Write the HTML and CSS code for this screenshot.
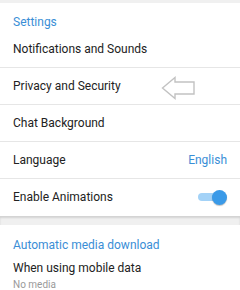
FILE: index.html
```html
<!DOCTYPE html>
<html>
<head>
<meta charset="utf-8">
<link rel="stylesheet" href="styles.css">
</head>
<body>
<div class="screen">
  <div class="top-strip"></div>
  <section class="section">
    <div class="header">Settings</div>
    <div class="row"><span class="label">Notifications and Sounds</span></div>
    <div class="row"><span class="label">Privacy and Security</span></div>
    <div class="row"><span class="label">Chat Background</span></div>
    <div class="row"><span class="label">Language</span><span class="value">English</span></div>
    <div class="row last"><span class="label">Enable Animations</span><span class="toggle"><span class="track"></span><span class="knob"></span></span></div>
  </section>
  <div class="gap"></div>
  <section class="section">
    <div class="header header2">Automatic media download</div>
    <div class="row2">
      <span class="label">When using mobile data</span>
      <span class="sub">No media</span>
    </div>
  </section>
  <svg class="arrow" width="40" height="28" viewBox="0 0 40 28">
    <polygon points="1.5,12 14,1.5 14,6 33,6 33,18 14,18 14,22.5" fill="none" stroke="#c2c2c2" stroke-width="1.4" stroke-linejoin="miter"/>
  </svg>
</div>
</body>
</html>
```
FILE: styles.css
```css
html, body {
  margin: 0;
  padding: 0;
  background: #ffffff;
}
.screen {
  position: relative;
  width: 240px;
  height: 290px;
  overflow: hidden;
  font-family: Roboto, "Noto Sans", sans-serif;
  color: #222222;
}
.top-strip {
  height: 3px;
  background: #f0f0f0;
}
.section {
  display: flex;
  flex-direction: column;
}
.header {
  height: 28px;
  box-sizing: border-box;
  padding: 12px 13px 0;
  font-size: 12px;
  line-height: 14px;
  color: #3a8ed6;
}
.header2 {
  height: 29px;
  padding-top: 13px;
}
.row {
  display: flex;
  align-items: center;
  justify-content: space-between;
  height: 36px;
  padding: 0 13px;
  border-bottom: 1px solid #e6e6e6;
  font-size: 12px;
}
.row.last {
  border-bottom: none;
}
.label {
  font-size: 12px;
  color: #222222;
}
.value {
  font-size: 12px;
  color: #3a8ed6;
}
.toggle {
  position: relative;
  width: 30px;
  height: 16px;
  display: flex;
  align-items: center;
}
.track {
  display: block;
  width: 26px;
  height: 8px;
  border-radius: 4px;
  background: #a3d2f7;
  margin-left: 1px;
}
.knob {
  position: absolute;
  right: 0;
  top: 0.5px;
  width: 15px;
  height: 15px;
  border-radius: 50%;
  background: #3a9ae8;
  box-shadow: 0 1px 1px rgba(0,0,0,0.25);
}
.gap {
  height: 9px;
  background: #f0f0f0;
  box-shadow: inset 0 2px 2px rgba(0,0,0,0.12);
  margin-top: 1px;
}
.row2 {
  display: flex;
  flex-direction: column;
  padding: 6px 13px 0;
}
.row2 .label {
  line-height: 16px;
}
.sub {
  font-size: 10px;
  line-height: 14px;
  margin-top: 2px;
  color: #9a9a9a;
}
.arrow {
  position: absolute;
  left: 161px;
  top: 76px;
}
```
